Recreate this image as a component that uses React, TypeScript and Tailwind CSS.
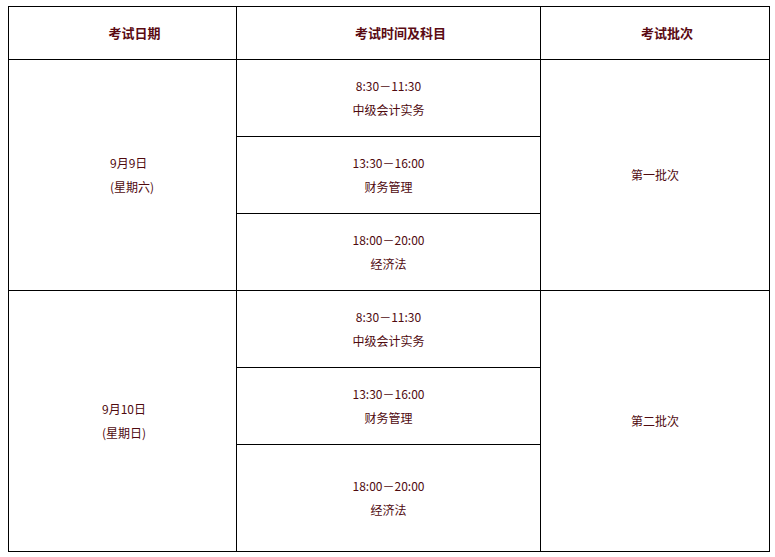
const FONT = { fontFamily: '"Noto Sans CJK SC", "Noto Sans", sans-serif' };

const SESSIONS = [
  { time: "8:30－11:30", subject: "中级会计实务" },
  { time: "13:30－16:00", subject: "财务管理" },
  { time: "18:00－20:00", subject: "经济法" },
];

const GROUPS = [
  { date: "9月9日", weekday: "(星期六)", batch: "第一批次", pad: "pl-[101px]" },
  { date: "9月10日", weekday: "(星期日)", batch: "第二批次", pad: "pl-[93px]" },
];

export default function App() {
  return (
    <div className="min-h-[557px] w-[775px] bg-white pt-[6px] pl-[8px]" style={FONT}>
      <div className="grid w-[762px] grid-cols-[228px_304px_229px] grid-rows-[53px_77px_77px_77px_77px_77px_107px] border-r border-b border-black text-[12px] leading-[24px] text-[#4f0a0f]">
        {["考试日期", "考试时间及科目", "考试批次"].map((h) => (
          <div
            key={h}
            className="flex items-center justify-center border-t border-l border-black pl-[24px] text-[13px] font-bold text-[#5a0a12]"
          >
            {h}
          </div>
        ))}
        {GROUPS.map((g) => (
          <GroupRows key={g.batch} group={g} />
        ))}
      </div>
    </div>
  );
}

function GroupRows({ group }: { group: (typeof GROUPS)[number] }) {
  return (
    <>
      <div className={`row-span-3 flex flex-col justify-center border-t border-l border-black ${group.pad}`}>
        <span>{group.date}</span>
        <span>{group.weekday}</span>
      </div>
      <div className="row-span-3 grid grid-rows-subgrid border-t border-l border-black">
        {SESSIONS.map((s, i) => (
          <div
            key={s.time}
            className={`flex flex-col items-center justify-center ${i > 0 ? "border-t border-black" : ""}`}
          >
            <span>{s.time}</span>
            <span>{s.subject}</span>
          </div>
        ))}
      </div>
      <div className="row-span-3 flex items-center justify-center border-t border-l border-black">{group.batch}</div>
    </>
  );
}
